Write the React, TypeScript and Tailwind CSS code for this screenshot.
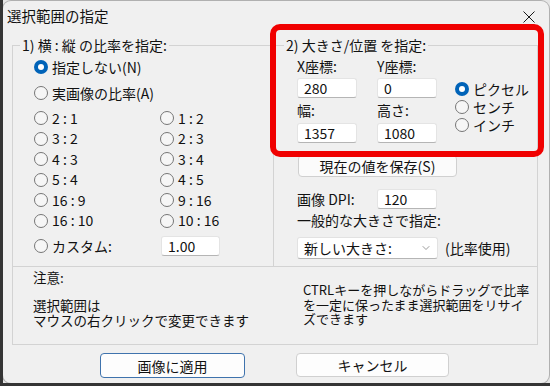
import React from 'react';
import { ChevronDown } from 'lucide-react';

// Windows 11 style dialog: 選択範囲の指定

const RATIOS: [string, string][] = [
  ['2 : 1', '1 : 2'],
  ['3 : 2', '2 : 3'],
  ['4 : 3', '3 : 4'],
  ['5 : 4', '4 : 5'],
  ['16 : 9', '9 : 16'],
  ['16 : 10', '10 : 16'],
];

const Radio = ({ checked = false }: { checked?: boolean }) =>
  checked ? (
    <span className="flex h-[14px] w-[14px] shrink-0 items-center justify-center rounded-full bg-[#0063b8]">
      <span className="h-[6px] w-[6px] rounded-full bg-white" />
    </span>
  ) : (
    <span className="h-[14px] w-[14px] shrink-0 rounded-full border border-[#767676] bg-[#f6f6f6]" />
  );

const RadioItem = ({ label, checked }: { label: string; checked?: boolean }) => (
  <div className="flex h-full items-center gap-[4px] whitespace-nowrap">
    <Radio checked={checked} />
    <span>{label}</span>
  </div>
);

const TextBox = ({ value, className }: { value: string; className: string }) => (
  <div
    className={`flex h-[20px] items-center rounded-[3px] border border-[#e4e4e4] border-b-[#b5b5b5] bg-white pl-[6px] leading-none ${className}`}
  >
    {value}
  </div>
);

export default function App() {
  return (
    <div className="relative h-[386px] w-[550px] overflow-hidden border-b-[3px] border-l-[3px] border-[#353535] bg-[#e6e6e6] pt-[1px] font-['Noto_Sans_CJK_JP','Noto_Sans',sans-serif] text-[14px] text-[#111]">
      <div className="h-[382px] w-[546px] rounded-[8px] bg-[#f0f0f0] shadow-[0_0_0_1px_#b0b0b0]">
        {/* title bar */}
        <div className="flex h-[31px] items-center justify-between pl-[4px] pr-[14px]">
          <span className="text-[14.5px] leading-none">選択範囲の指定</span>
          <svg width="12" height="12" viewBox="0 0 12 12">
            <path d="M0.5 0.5 L11.5 11.5 M11.5 0.5 L0.5 11.5" stroke="#1a1a1a" strokeWidth="1" />
          </svg>
        </div>

        <div className="mt-[4px] w-[535px] pl-[9px]">
          <div className="flex">
            {/* 1) ratio */}
            <fieldset className="h-[230px] w-[261px] border-0 border-l border-t border-[#d3d3d3]">
              <legend className="ml-[7px] px-[2px] leading-[18px]">1) 横 : 縦 の比率を指定:</legend>
              <div className="pl-[21px]">
                <div className="mt-[3px] h-[20px]">
                  <RadioItem checked label="指定しない(N)" />
                </div>
                <div className="mt-[6px] h-[20px]">
                  <RadioItem label="実画像の比率(A)" />
                </div>
                <div className="mt-[5px] grid auto-rows-[20.5px] grid-cols-[126px_1fr]">
                  {RATIOS.map(([a, b]) => (
                    <React.Fragment key={a}>
                      <RadioItem label={a} />
                      <RadioItem label={b} />
                    </React.Fragment>
                  ))}
                </div>
                <div className="mt-[4px] grid h-[22px] grid-cols-[126px_1fr] items-center">
                  <RadioItem label="カスタム:" />
                  <TextBox value="1.00" className="ml-[1px] w-[59px]" />
                </div>
              </div>
            </fieldset>

            {/* 2) size / position */}
            <fieldset className="h-[230px] w-[265px] border-0 border-x border-t border-[#d3d3d3]">
              <legend className="ml-[10px] px-[2px] leading-[18px]">2) 大きさ/位置 を指定:</legend>
              <div className="pl-[23px]">
                <div className="flex">
                  <div className="w-[158px]">
                    <div className="mt-[4px] flex h-[16px] items-center">
                      <span className="w-[80px]">X座標:</span>
                      <span>Y座標:</span>
                    </div>
                    <div className="mt-[4px] flex gap-[20px]">
                      <TextBox value="280" className="w-[60px]" />
                      <TextBox value="0" className="w-[60px]" />
                    </div>
                    <div className="mt-[4px] flex h-[16px] items-center">
                      <span className="w-[80px]">幅:</span>
                      <span>高さ:</span>
                    </div>
                    <div className="mt-[5px] flex gap-[20px]">
                      <TextBox value="1357" className="w-[60px]" />
                      <TextBox value="1080" className="w-[60px]" />
                    </div>
                  </div>
                  <div className="mt-[26px] flex flex-col">
                    <div className="h-[18px]">
                      <RadioItem checked label="ピクセル" />
                    </div>
                    <div className="h-[18px]">
                      <RadioItem label="センチ" />
                    </div>
                    <div className="h-[18px]">
                      <RadioItem label="インチ" />
                    </div>
                  </div>
                </div>

                <button className="ml-[1px] mt-[12px] flex h-[22px] w-[159px] items-center justify-center rounded-[4px] border border-[#d0d0d0] bg-[#fbfbfb] leading-none">
                  現在の値を保存(S)
                </button>

                <div className="mt-[12px] flex h-[20px] items-center">
                  <span className="w-[80px]">画像 DPI:</span>
                  <TextBox value="120" className="w-[60px]" />
                </div>
                <div className="mt-[3px] h-[16px] leading-[16px]">一般的な大きさで指定:</div>
                <div className="mt-[9px] flex items-center">
                  <div className="flex h-[22px] w-[141px] items-center justify-between rounded-[3px] border border-[#e2e2e2] border-b-[#b5b5b5] bg-white pl-[6px] pr-[5px] leading-none">
                    <span>新しい大きさ:</span>
                    <ChevronDown size={12} strokeWidth={1.5} color="#7a7a7a" />
                  </div>
                  <span className="ml-[7px] leading-none">(比率使用)</span>
                </div>
              </div>
            </fieldset>
          </div>

          {/* notes */}
          <div className="flex h-[79px] border border-[#d3d3d3]">
            <div className="w-[290px] pl-[20px] pt-[3px] text-[13.5px] leading-[14.5px]">
              <div>注意:</div>
              <div className="mt-[13.5px] whitespace-nowrap leading-[15px]">
                選択範囲は
                <br />
                マウスの右クリックで変更できます
              </div>
            </div>
            <div className="whitespace-nowrap pt-[16px] text-[13px] leading-[14.5px]">
              CTRLキーを押しながらドラッグで比率
              <br />
              を一定に保ったまま選択範囲をリサイ
              <br />
              ズできます
            </div>
          </div>

          {/* buttons */}
          <div className="ml-[88px] mt-[8px] flex items-start gap-[51px]">
            <button className="flex h-[25px] w-[145px] items-center justify-center rounded-[4px] border border-[#3f73ad] bg-[#fdfdfd] leading-none">
              画像に適用
            </button>
            <button className="flex h-[24px] w-[153px] items-center justify-center rounded-[4px] border border-[#d0d0d0] bg-[#fdfdfd] leading-none">
              キャンセル
            </button>
          </div>
        </div>
      </div>

      {/* red highlight */}
      <div className="pointer-events-none absolute left-[267px] top-[24px] h-[133px] w-[274px] rounded-[10px] border-[6px] border-[#f00000]" />
    </div>
  );
}
